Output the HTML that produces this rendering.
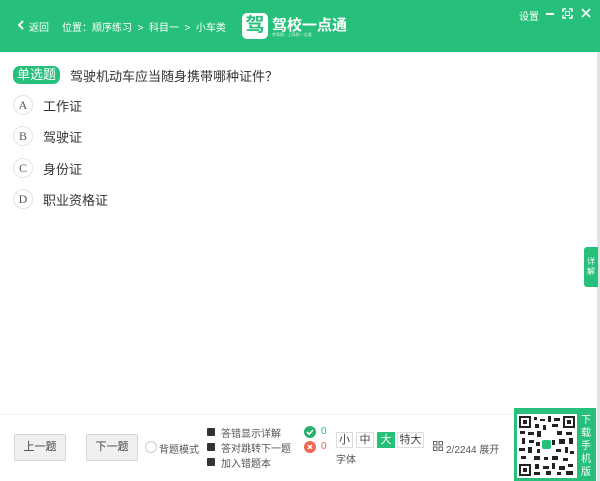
<!DOCTYPE html>
<html><head><meta charset="utf-8"><style>
*{margin:0;padding:0;box-sizing:border-box}
body{width:600px;height:481px;overflow:hidden;background:#fff;font-family:"Liberation Sans","Noto Sans CJK SC",sans-serif;position:relative;color:#333}
.a{position:absolute}
.hdr{left:0;top:0;width:600px;height:52px;background:#27c07b}
.w{color:#fff;font-size:11px}
.opt{font-size:13px;color:#333}
.circ{width:20px;height:20px;border-radius:50%;border:1px solid #e3e3e3;font-family:"Liberation Serif",serif;font-size:12px;color:#555;text-align:center;line-height:18px}
.btn{width:52px;height:27px;border:1px solid #d6d6d6;background:#f0f0f0;border-radius:2px;font-size:11px;color:#444;text-align:center;line-height:25px}
.cb{width:8px;height:8px;background:#333;border-radius:1px}
.s{font-size:10px;color:#555}
.fb{height:16px;border:1px solid #ddd;font-size:11px;text-align:center;line-height:14px;color:#444}
</style></head><body>
<div class="a hdr"></div>
<svg class="a" style="left:17px;top:20px" width="8" height="10"><path d="M6 1L2 5L6 9" stroke="#fff" stroke-width="2" fill="none"/></svg>
<div class="a w" style="left:29px;top:19px;font-size:10px">返回</div>
<div class="a w" style="left:62px;top:19px;font-size:10px">位置：顺序练习 &nbsp;&gt;&nbsp; 科目一 &nbsp;&gt;&nbsp; 小车类</div>
<div class="a" style="left:242px;top:13px;width:26px;height:26px;background:#fff;border-radius:5px;color:#27c07b;font-size:19px;font-weight:bold;text-align:center;line-height:26px">驾</div>
<div class="a w" style="left:272px;top:14px;font-size:15px;font-weight:bold;letter-spacing:0">驾校一点通</div>
<div class="a w" style="left:272px;top:32px;font-size:4px;opacity:.8">考驾照 · 上驾校一点通</div>
<div class="a w" style="left:519px;top:8px;font-size:10px">设置</div>
<div class="a" style="left:546px;top:13px;width:8px;height:2px;background:#fff"></div>
<svg class="a" style="left:562px;top:8px" width="11" height="11"><path d="M1 4V1H4M7 1H10V4M10 7V10H7M4 10H1V7" stroke="#fff" stroke-width="1.4" fill="none"/><rect x="3.5" y="3.5" width="4" height="4" stroke="#fff" fill="none"/></svg>
<svg class="a" style="left:581px;top:8px" width="10" height="10"><path d="M1 1L9 9M9 1L1 9" stroke="#fff" stroke-width="1.6"/></svg>
<div class="a" style="left:597px;top:52px;width:3px;height:429px;background:#e2e2e2"></div>

<div class="a" style="left:13px;top:66px;width:47px;height:18px;background:#27c07b;border-radius:7px;color:#fff;font-size:13px;text-align:center;line-height:18px">单选题</div>
<div class="a" style="left:70px;top:66px;font-size:13px;color:#333">驾驶机动车应当随身携带哪种证件？</div>
<div class="a circ" style="left:13px;top:95px">A</div><div class="a opt" style="left:43px;top:96px">工作证</div>
<div class="a circ" style="left:13px;top:126px">B</div><div class="a opt" style="left:43px;top:127px">驾驶证</div>
<div class="a circ" style="left:13px;top:158px">C</div><div class="a opt" style="left:43px;top:159px">身份证</div>
<div class="a circ" style="left:13px;top:189px">D</div><div class="a opt" style="left:43px;top:190px">职业资格证</div>

<div class="a" style="left:584px;top:247px;width:14px;height:40px;background:#27c07b;border-radius:3px 0 0 3px;color:#fff;font-size:8px;text-align:center;line-height:10px;padding-top:10px">详<br>解</div>

<div class="a" style="left:0;top:414px;width:597px;height:1px;background:#f0f0f0"></div>
<div class="a btn" style="left:14px;top:434px">上一题</div>
<div class="a btn" style="left:86px;top:434px">下一题</div>
<div class="a" style="left:145px;top:441px;width:12px;height:12px;border-radius:50%;border:1px solid #ccc"></div>
<div class="a s" style="left:159px;top:441px">背题模式</div>
<div class="a cb" style="left:207px;top:428px"></div><div class="a s" style="left:221px;top:425px">答错显示详解</div>
<div class="a cb" style="left:207px;top:443px"></div><div class="a s" style="left:221px;top:440px">答对跳转下一题</div>
<div class="a cb" style="left:207px;top:458px"></div><div class="a s" style="left:221px;top:455px">加入错题本</div>
<div class="a" style="left:304px;top:426px;width:12px;height:12px;border-radius:50%;background:#27b070"></div>
<svg class="a" style="left:304px;top:426px" width="12" height="12"><path d="M3 6L5.2 8.2L9 4" stroke="#fff" stroke-width="1.6" fill="none"/></svg>
<div class="a" style="left:321px;top:426px;font-size:10px;color:#27c07b">0</div>
<div class="a" style="left:304px;top:441px;width:12px;height:12px;border-radius:50%;background:#f0664f"></div>
<svg class="a" style="left:304px;top:441px" width="12" height="12"><path d="M4 4L8 8M8 4L4 8" stroke="#fff" stroke-width="1.5"/></svg>
<div class="a" style="left:321px;top:441px;font-size:10px;color:#f0664f">0</div>
<div class="a fb" style="left:336px;top:432px;width:17px">小</div>
<div class="a fb" style="left:356px;top:432px;width:18px">中</div>
<div class="a fb" style="left:377px;top:432px;width:18px;background:#27c07b;border-color:#27c07b;color:#fff">大</div>
<div class="a fb" style="left:397px;top:432px;width:27px">特大</div>
<div class="a s" style="left:336px;top:451px;font-size:10px">字体</div>
<svg class="a" style="left:433px;top:441px" width="10" height="10"><g fill="none" stroke="#666"><rect x=".5" y=".5" width="3.5" height="3.5"/><rect x="6" y=".5" width="3.5" height="3.5"/><rect x=".5" y="6" width="3.5" height="3.5"/><rect x="6" y="6" width="3.5" height="3.5"/></g></svg>
<div class="a s" style="left:446px;top:441px">2/2244 展开</div>

<div class="a" style="left:514px;top:408px;width:82px;height:73px;background:#27c07b"></div>
<div class="a" style="left:517px;top:414px;width:60px;height:64px;background:#fff"></div>
<svg class="a" style="left:519px;top:416px" width="56" height="60">
<g fill="#222">
<rect x="0" y="0" width="12" height="12"/><rect x="44" y="0" width="12" height="12"/><rect x="0" y="48" width="12" height="12"/>
</g>
<g fill="#fff"><rect x="2" y="2" width="8" height="8"/><rect x="46" y="2" width="8" height="8"/><rect x="2" y="50" width="8" height="8"/></g>
<g fill="#222"><rect x="4" y="4" width="4" height="4"/><rect x="48" y="4" width="4" height="4"/><rect x="4" y="52" width="4" height="4"/>
<rect x="15" y="1" width="3" height="3"/><rect x="21" y="3" width="5" height="2"/><rect x="29" y="0" width="3" height="6"/><rect x="35" y="2" width="6" height="3"/>
<rect x="16" y="8" width="4" height="4"/><rect x="24" y="9" width="3" height="5"/><rect x="33" y="8" width="6" height="3"/>
<rect x="1" y="15" width="5" height="3"/><rect x="9" y="16" width="6" height="3"/><rect x="18" y="15" width="4" height="6"/><rect x="38" y="15" width="5" height="4"/><rect x="47" y="16" width="6" height="3"/>
<rect x="3" y="22" width="3" height="6"/><rect x="10" y="24" width="5" height="3"/><rect x="40" y="23" width="6" height="5"/><rect x="50" y="22" width="4" height="6"/>
<rect x="0" y="32" width="6" height="3"/><rect x="9" y="31" width="4" height="6"/><rect x="37" y="33" width="5" height="3"/><rect x="46" y="31" width="3" height="6"/><rect x="51" y="35" width="4" height="3"/>
<rect x="2" y="40" width="5" height="3"/><rect x="15" y="40" width="6" height="4"/><rect x="25" y="41" width="4" height="3"/><rect x="33" y="40" width="6" height="4"/><rect x="44" y="42" width="5" height="3"/>
<rect x="16" y="48" width="4" height="5"/><rect x="24" y="50" width="6" height="3"/><rect x="33" y="47" width="3" height="6"/><rect x="40" y="50" width="6" height="4"/><rect x="49" y="48" width="5" height="3"/>
<rect x="15" y="56" width="6" height="3"/><rect x="27" y="55" width="5" height="4"/><rect x="38" y="56" width="4" height="3"/><rect x="47" y="55" width="7" height="4"/>
<rect x="17" y="26" width="4" height="4"/><rect x="33" y="24" width="3" height="5"/><rect x="18" y="33" width="3" height="4"/></g>
<rect x="23" y="24" width="9" height="9" rx="2" fill="#27c07b"/>
</svg>
<div class="a" style="left:578px;top:414px;width:16px;color:#fff;font-size:10px;line-height:13px;text-align:center">下<br>载<br>手<br>机<br>版</div>
</body></html>
